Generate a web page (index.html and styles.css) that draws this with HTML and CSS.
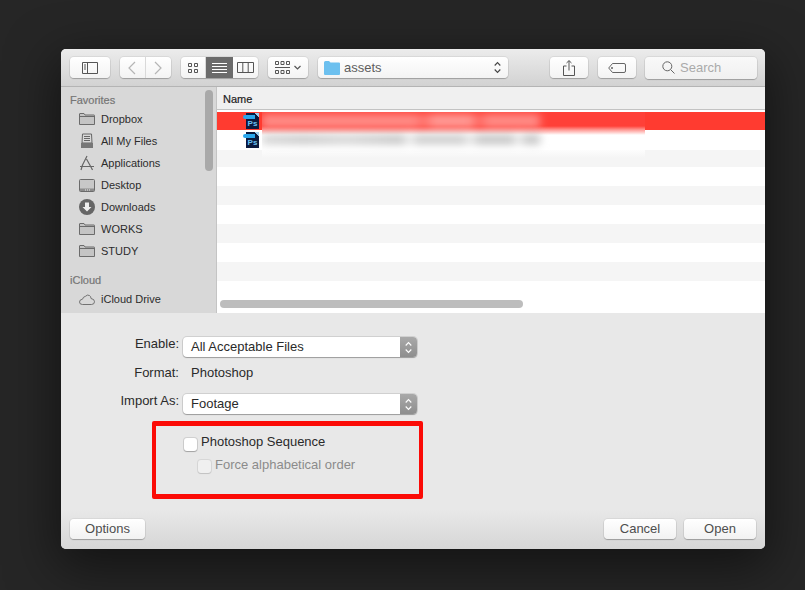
FILE: index.html
```html
<!DOCTYPE html>
<html lang="en">
<head>
  <meta charset="UTF-8" />
  <title>Import File</title>
  <link rel="stylesheet" href="styles.css">
</head>
<body>

<div class="dialog">
  <!-- Toolbar -->
  <div class="toolbar">
    <button class="tool tool-sidebar">
      <svg width="16" height="12" viewBox="0 0 16 12"><path d="M.5.5h15v11H.5zM5.5.5v11M2 3h2M2 5h2M2 7h2" fill="none" stroke="#555"/></svg>
    </button>
    <div class="tool-group nav-group">
      <button class="tool tool-nav">
        <svg width="10" height="14" viewBox="0 0 10 14"><path d="M8 1 2 7l6 6" fill="none" stroke="#b5b5b5" stroke-width="1.2"/></svg>
      </button>
      <button class="tool tool-nav">
        <svg width="10" height="14" viewBox="0 0 10 14"><path d="m2 1 6 6-6 6" fill="none" stroke="#b5b5b5" stroke-width="1.2"/></svg>
      </button>
    </div>
    <div class="tool-group view-group">
      <button class="tool tool-view">
        <svg width="12" height="12" viewBox="0 0 12 12"><path d="M1.5 1.5h3v3h-3zM7.5 1.5h3v3h-3zM1.5 7.5h3v3h-3zM7.5 7.5h3v3h-3z" fill="none" stroke="#555"/></svg>
      </button>
      <button class="tool tool-view view-active">
        <svg width="15" height="12" viewBox="0 0 15 12"><path d="M0 1.5h15M0 4.5h15M0 7.5h15M0 10.5h15" stroke="#fff"/></svg>
      </button>
      <button class="tool tool-view">
        <svg width="17" height="11" viewBox="0 0 17 11"><path d="M.5.5h16v10H.5zM5.8.5v10M11.2.5v10" fill="none" stroke="#555"/></svg>
      </button>
    </div>
    <button class="tool tool-arrange">
      <svg width="15" height="13" viewBox="0 0 15 13"><path d="M.5.5h3v3h-3zM6 .5h3v3H6zM11.5.5h3v3h-3zM.5 9.5h3v3h-3zM6 9.5h3v3H6zM11.5 9.5h3v3h-3zM0 6.5h15" fill="none" stroke="#555"/></svg>
      <svg width="7" height="5" viewBox="0 0 7 5"><path d="m.5 1 3 3 3-3" fill="none" stroke="#555" stroke-width="1.2"/></svg>
    </button>
    <button class="tool tool-path">
      <svg width="16" height="14" viewBox="0 0 16 14"><path d="M0 1.5Q0 0 1.500 0H5l1.500 1.500H15q1 0 1 1V13q0 1-1 1H1q-1 0-1-1z" fill="#6cc0ef"/></svg>
      <span class="path-name">assets</span>
      <svg class="updown" width="7" height="13" viewBox="0 0 7 13"><path d="m.7 4.500 2.800-3 2.800 3M.7 8.500l2.800 3 2.800-3" fill="none" stroke="#444" stroke-width="1.1"/></svg>
    </button>
    <button class="tool tool-share">
      <svg width="12" height="16" viewBox="0 0 12 16"><path d="M3.500 6H.5v9.500h11V6h-3M6 10.500V.8M3.500 3 6 .6 8.500 3" fill="none" stroke="#555"/></svg>
    </button>
    <button class="tool tool-tag">
      <svg width="18" height="10" viewBox="0 0 18 10"><path d="M4.500.5H16q1.500 0 1.500 1.500v6q0 1.500-1.500 1.500H4.500L.7 5zM3.500 4.500h1v1h-1z" fill="none" stroke="#555" stroke-width=".9"/></svg>
    </button>
    <div class="search">
      <svg width="13" height="13" viewBox="0 0 13 13"><circle cx="5.300" cy="5.300" r="4.500" fill="none" stroke="#666"/><path d="m8.700 8.700 3.800 3.800" stroke="#666"/></svg>
      <span>Search</span>
    </div>
  </div>

  <!-- Browser -->
  <div class="browser">
    <div class="sidebar">
      <div class="side-title">Favorites</div>
      <div class="side-item">
        <svg width="16" height="12" viewBox="0 0 16 12"><path d="M.5 11.500V1q0-.5.5-.5h4L6 2h9q.5 0 .5.5v9zM.5 3.500h15" fill="#c4c4c4" stroke="#6b6b6b"/></svg>
        Dropbox
      </div>
      <div class="side-item">
        <svg width="16" height="16" viewBox="0 0 16 16"><path d="M3.500 1h9l.5 9H3z" fill="#d8d8d8" stroke="#666"/><path d="M5 3.500h6M5 5.500h6M5 7.500h6" stroke="#666"/><path d="M2 10h12v5H2z" fill="#777"/></svg>
        All My Files
      </div>
      <div class="side-item">
        <svg width="16" height="16" viewBox="0 0 16 16"><path d="M8 1 3.500 10M7.500 4l5 9M1 11.500h14M3.500 10 2 15M12.500 13l1 2" fill="none" stroke="#666" stroke-width="1.2"/></svg>
        Applications
      </div>
      <div class="side-item">
        <svg width="16" height="13" viewBox="0 0 16 13"><rect x=".5" y=".5" width="15" height="12" rx="1" fill="#c8c8c8" stroke="#6b6b6b"/><path d="M1 9.500h14V12H1z" fill="#8c8c8c"/><path d="M6 11h1M8 11h1M10 11h1" stroke="#eee"/></svg>
        Desktop
      </div>
      <div class="side-item">
        <svg width="16" height="16" viewBox="0 0 16 16"><circle cx="8" cy="8" r="8" fill="#666"/><path d="M6 3.500h4V8h2.500L8 12.500 3.500 8H6z" fill="#eee"/></svg>
        Downloads
      </div>
      <div class="side-item">
        <svg width="16" height="12" viewBox="0 0 16 12"><path d="M.5 11.500V1q0-.5.5-.5h4L6 2h9q.5 0 .5.5v9zM.5 3.500h15" fill="#c4c4c4" stroke="#6b6b6b"/></svg>
        WORKS
      </div>
      <div class="side-item">
        <svg width="16" height="12" viewBox="0 0 16 12"><path d="M.5 11.500V1q0-.5.5-.5h4L6 2h9q.5 0 .5.5v9zM.5 3.500h15" fill="#c4c4c4" stroke="#6b6b6b"/></svg>
        STUDY
      </div>
      <div class="side-title side-title-cloud">iCloud</div>
      <div class="side-item side-item-cloud">
        <svg width="16" height="11" viewBox="0 0 16 11"><path d="M3.500 10.500Q.5 10.500.5 8t3-2.800Q4 2.800 6.500 2.300 8.200.3 10.500 1.500q1.500 1 1.500 3 3.500.5 3.500 3.200t-3 2.800z" fill="none" stroke="#666" stroke-width=".9"/></svg>
        iCloud Drive
      </div>
      <div class="side-scroll"></div>
    </div>

    <div class="files">
      <div class="files-head">Name</div>
      <div class="rows">
        <div class="row row-selected"></div>
        <div class="row row-tall"></div>
        <div class="row row-alt row-short"></div>
        <div class="row"></div>
        <div class="row row-alt"></div>
        <div class="row"></div>
        <div class="row row-alt"></div>
        <div class="row"></div>
        <div class="row row-alt"></div>
      </div>
      <div class="blur-patch">
        <div class="blur-line blur-line-one"></div>
        <div class="blur-line blur-line-two"></div>
      </div>
      <div class="ps-icon ps-icon-one"><span>Ps</span></div>
      <div class="ps-icon ps-icon-two"><span>Ps</span></div>
      <div class="h-scroll"></div>
    </div>
  </div>

  <!-- Import options -->
  <div class="options">
    <div class="option-grid">
      <div class="opt-label">Enable:</div>
      <div class="select">
        <span class="select-text">All Acceptable Files</span>
        <div class="select-arrows">
          <svg width="7" height="13" viewBox="0 0 7 13"><path d="m.7 4.500 2.800-3 2.800 3M.7 8.500l2.800 3 2.800-3" fill="none" stroke="#fff" stroke-width="1.1"/></svg>
        </div>
      </div>
      <div class="opt-label">Format:</div>
      <div class="opt-value">Photoshop</div>
      <div class="opt-label">Import As:</div>
      <div class="select">
        <span class="select-text">Footage</span>
        <div class="select-arrows">
          <svg width="7" height="13" viewBox="0 0 7 13"><path d="m.7 4.500 2.800-3 2.800 3M.7 8.500l2.800 3 2.800-3" fill="none" stroke="#fff" stroke-width="1.1"/></svg>
        </div>
      </div>
    </div>
    <div class="sequence">
      <label class="check"><span class="box"></span>Photoshop Sequence</label>
      <label class="check check-off"><span class="box"></span>Force alphabetical order</label>
    </div>
    <div class="red-box"></div>
  </div>

  <!-- Footer -->
  <div class="footer">
    <button class="foot-btn foot-options">Options</button>
    <button class="foot-btn foot-cancel">Cancel</button>
    <button class="foot-btn foot-open">Open</button>
  </div>
</div>

</body>
</html>
```

FILE: styles.css
```css
body {
  margin: 0;
  padding: 49px 0 0 61px;
  height: 590px;
  box-sizing: border-box;
  overflow: hidden;
  font-family: "Liberation Sans", Arial, sans-serif;
  background-color: #262626;
}

button {
  font-family: inherit;
  padding: 0;
  cursor: default;
}

.dialog {
  position: relative;
  width: 704px;
  height: 500px;
  display: flex;
  flex-direction: column;
  border-radius: 5px;
  overflow: hidden;
  background-color: #e8e8e8;
  box-shadow: 0 14px 50px 4px rgba(0,0,0,0.5);
}

.toolbar {
  height: 38px;
  flex: none;
  display: flex;
  align-items: center;
  padding-left: 9px;
  box-sizing: border-box;
  background: linear-gradient(#ececec, #d2d2d2);
  border-bottom: 1px solid #b4b4b4;
}

.tool {
  height: 21px;
  display: flex;
  align-items: center;
  justify-content: center;
  background: linear-gradient(#ffffff, #f3f3f3);
  border: none;
  border-radius: 4px;
  box-shadow: 0 0 0 1px rgba(0,0,0,0.06), 0 1px 1px rgba(0,0,0,0.22);
}

.tool-sidebar { width: 40px; }

.tool-group {
  display: flex;
  border-radius: 4px;
  box-shadow: 0 0 0 1px rgba(0,0,0,0.06), 0 1px 1px rgba(0,0,0,0.22);
}

.tool-group .tool {
  box-shadow: none;
  border-radius: 0;
  border-right: 1px solid #d9d9d9;
}

.tool-group .tool:first-child { border-radius: 4px 0 0 4px; }
.tool-group .tool:last-child { border-radius: 0 4px 4px 0; border-right: none; }

.nav-group { margin-left: 10px; }
.tool-nav { width: 25.5px; }

.view-group { margin-left: 10px; }
.tool-view { width: 25px; }
.tool-group .view-active {
  width: 27px;
  background: #6b6b6b;
  border-right: none;
}

.tool-arrange {
  width: 40px;
  margin-left: 10px;
  gap: 4px;
}

.tool-path {
  width: 190px;
  margin-left: 10px;
  padding: 0 7px 0 6px;
  box-sizing: border-box;
  justify-content: flex-start;
}

.path-name {
  margin-left: 4px;
  font-size: 13px;
  color: #5e5e5e;
}

.updown { margin-left: auto; }

.tool-share {
  width: 38px;
  margin-left: 42px;
}

.tool-tag {
  width: 38px;
  margin-left: 10px;
}

.search {
  width: 112px;
  height: 22px;
  margin-left: 9px;
  padding-left: 17px;
  box-sizing: border-box;
  display: flex;
  align-items: center;
  gap: 5px;
  font-size: 13px;
  color: #aaa;
  background: linear-gradient(#f9f9f9, #f0f0f0);
  border-radius: 4px;
  box-shadow: 0 0 0 1px rgba(0,0,0,0.06), 0 1px 1px rgba(0,0,0,0.22);
}

.browser {
  height: 226px;
  flex: none;
  display: flex;
}

.sidebar {
  position: relative;
  width: 156px;
  flex: none;
  padding: 5px 0 0 9px;
  box-sizing: border-box;
  background-color: #d8d8d8;
  border-right: 1px solid #c4c4c4;
  font-size: 11px;
  color: #2c2c2c;
}

.side-title {
  height: 16px;
  line-height: 16px;
  color: #757575;
  -webkit-text-stroke: 0.2px #757575;
}

.side-title-cloud { margin-top: 10px; }

.side-item {
  height: 22px;
  display: flex;
  align-items: center;
  gap: 6px;
  padding-left: 9px;
}

.side-item svg { flex: none; }
.side-item-cloud { height: 22px; }

.side-scroll {
  position: absolute;
  top: 3px;
  left: 144px;
  width: 8px;
  height: 81px;
  border-radius: 4px;
  background-color: #a9a9a9;
}

.files {
  position: relative;
  flex: 1;
  background-color: #fff;
  overflow: hidden;
}

.files-head {
  height: 23px;
  padding: 6px 0 0 6px;
  box-sizing: border-box;
  font-size: 11px;
  color: #222;
  background-color: #f0f0f0;
  border-bottom: 1px solid #c3c3c3;
  -webkit-text-stroke: 0.2px #222;
}

.rows { padding-top: 2px; }

.row { height: 19px; }
.row-selected { height: 18px; background-color: #ff3b30; }
.row-tall { height: 20px; }
.row-short { height: 17px; }
.row-alt { background-color: #f5f5f5; }

/* smudged out file names */
.blur-patch {
  position: absolute;
  left: 45px;
  top: 25px;
  width: 383px;
  height: 46px;
  overflow: hidden;
  background: linear-gradient(#ff4038 0, #ff4038 14px, #ff9d98 18px, #fff 23px, #fff 36px, rgba(255,255,255,0) 46px);
}

.blur-line {
  position: absolute;
  left: 0;
  width: 278px;
  filter: blur(4px);
}

.blur-line-one {
  top: 2px;
  height: 14px;
  background: linear-gradient(90deg, #ff8d88 0, #ff8d88 55%, #ff6f69 58%, #ff9c97 62%, #ff9c97 75%, #ff625c 78%, #ff8d88 81%, #ff8d88 100%);
}

.blur-line-two {
  top: 23px;
  height: 9px;
  background: linear-gradient(90deg, #d2d2d2 0, #c6c6c6 15%, #d2d2d2 30%, #c0c0c0 50%, #f0f0f0 53%, #c8c8c8 56%, #c8c8c8 72%, #ececec 75%, #c0c0c0 78%, #c0c0c0 90%, #f4f4f4 92%, #c0c0c0 95%, #c0c0c0 100%);
}

.ps-icon {
  position: absolute;
  left: 29px;
  width: 13px;
  height: 16px;
  background: linear-gradient(225deg, #9fd0f0 0, #9fd0f0 3px, #0b1a3e 3px);
  display: flex;
  align-items: flex-end;
  justify-content: center;
  font-size: 8px;
  line-height: 10px;
  font-weight: bold;
  color: #6cc4f5;
}

.ps-icon::before {
  content: "";
  position: absolute;
  left: -3px;
  top: 2px;
  width: 12px;
  height: 4px;
  border-radius: 2px 0 0 2px;
  background-color: #2ba6ec;
}

.ps-icon-one { top: 26px; }
.ps-icon-two { top: 45px; }

.h-scroll {
  position: absolute;
  left: 3px;
  top: 213px;
  width: 303px;
  height: 8px;
  border-radius: 4px;
  background-color: #bdbdbd;
}

.options {
  position: relative;
  flex: 1;
  padding-top: 23px;
  box-sizing: border-box;
  background-color: #e8e8e8;
  font-size: 13px;
  color: #2a2a2a;
}

.option-grid {
  display: grid;
  grid-template-columns: 118px 234px;
  grid-template-rows: 22px 21px 22px;
  row-gap: 7px;
  column-gap: 4px;
  align-items: center;
}

.opt-label {
  text-align: right;
  margin-top: -7px;
}

.opt-value {
  padding-left: 8px;
  margin-top: -6px;
}

.select {
  height: 20px;
  display: flex;
  align-items: center;
  justify-content: space-between;
  padding-left: 8px;
  background-color: #fff;
  border-radius: 4px;
  box-shadow: 0 0 0 1px rgba(0,0,0,0.1), 0 1px 1px rgba(0,0,0,0.25);
  overflow: hidden;
}

.select-text { margin-top: -2px; }

.select-arrows {
  width: 17px;
  height: 20px;
  display: flex;
  align-items: center;
  justify-content: center;
  background: linear-gradient(#a9a9a9, #8e8e8e);
}

.sequence {
  margin: 18px 0 0 123px;
  display: flex;
  flex-direction: column;
  gap: 7px;
}

.check {
  display: flex;
  align-items: center;
  gap: 4px;
  height: 16px;
}

.box {
  width: 13px;
  height: 13px;
  margin-top: 7px;
  background-color: #fff;
  border-radius: 3px;
  box-shadow: 0 0 0 1px rgba(0,0,0,0.1), 0 1px 1px rgba(0,0,0,0.22);
}

.check-off {
  margin-left: 14px;
  color: #8b8b8b;
}

.check-off .box {
  margin-top: 4px;
  background-color: #f0f0f0;
  box-shadow: 0 0 0 1px rgba(0,0,0,0.07), 0 1px 1px rgba(0,0,0,0.1);
}

.red-box {
  position: absolute;
  left: 91px;
  top: 108px;
  width: 271px;
  height: 78px;
  box-sizing: border-box;
  border-style: solid;
  border-width: 5px 4px;
  border-color: #fb0b06;
  border-radius: 2px;
}

.footer {
  height: 39px;
  flex: none;
  display: flex;
  align-items: flex-start;
  padding: 9px 9px 0 9px;
  box-sizing: border-box;
  background: linear-gradient(#e8e8e8, #d6d6d6);
}

.foot-btn {
  height: 20px;
  padding-bottom: 2px;
  border: none;
  border-radius: 4px;
  font-size: 13px;
  color: #4e4e4e;
  background: linear-gradient(#ffffff, #f2f2f2);
  box-shadow: 0 0 0 1px rgba(0,0,0,0.05), 0 1px 1px rgba(0,0,0,0.25);
}

.foot-options { width: 75px; }
.foot-cancel { width: 72px; margin-left: auto; }
.foot-open { width: 72px; margin-left: 8px; }
```
